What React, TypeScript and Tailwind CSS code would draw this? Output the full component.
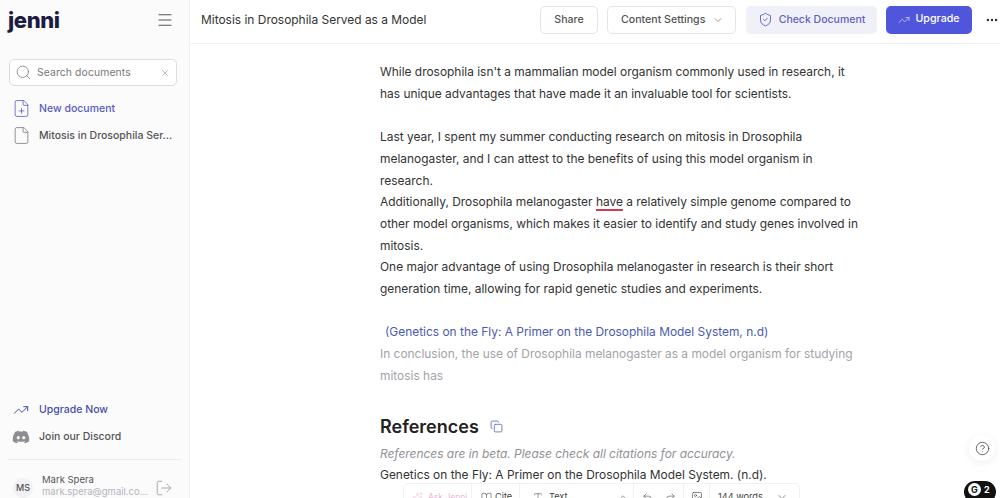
import { ChevronDown, ChevronUp, Copy, Image, LogOut, Menu, MoreHorizontal, Redo2, Search, ShieldCheck, TrendingUp, Undo2, X, BookOpen, HelpCircle, FilePlus, File, Type, Sparkles } from 'lucide-react';
import { FaDiscord } from 'react-icons/fa';

const font = "font-['Inter','Noto_Sans',sans-serif]";

function App() {
  return (
    <div className={`${font} relative h-[498px] w-[1000px] overflow-hidden bg-white flex text-[#242429] whitespace-nowrap`}>
      {/* Sidebar */}
      <aside className="w-[190px] h-full shrink-0 bg-[#fbfbfc] border-r border-[#f0f0f2] flex flex-col">
        <div className="h-[40px] flex items-center justify-between pl-[8px] pr-[15px]">
          <span className="text-[22px] font-extrabold tracking-[-0.4px] text-[#1d1b3f] leading-none">jenni</span>
          <Menu className="w-[18px] h-[18px] text-[#555]" strokeWidth={1.5} />
        </div>
        <div className="ml-[9px] w-[168px] mt-[19px] h-[27px] border border-[#dcdde2] rounded-[5px] bg-white flex items-center pl-[5px] pr-[6px]">
          <Search className="w-[17px] h-[17px] text-[#777]" strokeWidth={1.1} />
          <span className="ml-[5px] text-[10.4px] text-[#777] flex-1 tracking-[0.1px]">Search documents</span>
          <X className="w-[10px] h-[10px] text-[#999]" strokeWidth={1.5} />
        </div>
        <div className="mt-[9px] pl-[12px] flex items-center gap-[8px] h-[27px]">
          <FilePlus className="w-[19px] h-[19px] text-[#5558c8]" strokeWidth={1} />
          <span className="text-[10.5px] font-medium text-[#5a5dbd]">New document</span>
        </div>
        <div className="pl-[12px] flex items-center gap-[8px] h-[27px]">
          <File className="w-[19px] h-[19px] text-[#777]" strokeWidth={1} />
          <span className="text-[10.5px] font-medium text-[#555]">Mitosis in Drosophila Ser...</span>
        </div>
        <div className="mt-auto flex flex-col">
          <div className="pl-[13px] flex items-center gap-[10px] h-[27px]">
            <TrendingUp className="w-[16px] h-[16px] text-[#4a4fa8]" strokeWidth={1.5} />
            <span className="text-[10.5px] font-medium text-[#4a4fa8]">Upgrade Now</span>
          </div>
          <div className="pl-[12px] flex items-center gap-[9px] h-[27px]">
            <FaDiscord className="w-[18px] h-[18px] text-[#8d8d94]" />
            <span className="text-[10.5px] font-medium text-[#555]">Join our Discord</span>
          </div>
          <div className="mx-[8px] mt-[9px] border-t border-[#ececef]" />
          <div className="h-[38px] flex items-start pt-[18px] pl-[13px] pr-[16px]">
            <div className="w-[20px] h-[20px] rounded-full bg-[#f1f1f3] flex items-center justify-center text-[9px] font-medium text-[#555]">MS</div>
            <div className="ml-[9px] flex-1 flex flex-col -mt-[4px]">
              <span className="text-[9.5px] leading-[12px] text-[#555]">Mark Spera</span>
              <span className="text-[9.5px] leading-[12px] text-[#b4b4ba]">mark.spera@gmail.co...</span>
            </div>
            <LogOut className="w-[18px] h-[18px] mt-[1px] text-[#999]" strokeWidth={1.1} />
          </div>
        </div>
      </aside>

      {/* Main */}
      <main className="flex-1 min-w-0 h-full flex flex-col">
        <header className="h-[44px] shrink-0 border-b border-[#f0f0f2] flex items-center pl-[11px] pr-[1px] pb-[4px]">
          <span className="text-[11.95px] text-[#333] flex-1">Mitosis in Drosophila Served as a Model</span>
          <div className="w-[58px] h-[28px] border border-[#e4e4e8] rounded-[5px] flex items-center justify-center text-[10.6px] font-medium text-[#555]">Share</div>
          <div className="ml-[9px] w-[129px] h-[28px] border border-[#e4e4e8] rounded-[5px] flex items-center pl-[13px] gap-[7px] text-[10.6px] font-medium text-[#555]">
            Content Settings
            <ChevronDown className="w-[12px] h-[12px] text-[#777]" strokeWidth={1.5} />
          </div>
          <div className="ml-[10px] w-[131px] h-[28px] rounded-[5px] bg-[#f0f0f9] flex items-center justify-center gap-[6px] text-[10.5px] font-medium text-[#5f63c0]">
            <ShieldCheck className="w-[15px] h-[15px]" strokeWidth={1.5} />
            Check Document
          </div>
          <div className="ml-[9px] w-[86px] h-[28px] rounded-[5px] bg-[#4f56dc] flex items-center justify-center gap-[5px] text-[10.7px] font-medium text-white">
            <TrendingUp className="w-[12px] h-[12px] text-[#d5d6f5]" strokeWidth={1.5} />
            Upgrade
          </div>
          <MoreHorizontal className="ml-[13px] w-[14px] h-[14px] text-[#333]" strokeWidth={2.25} />
        </header>

        <div className="relative flex-1 min-h-0 overflow-hidden pl-[190px] pt-[17px]">
          <div className="text-[11.93px] leading-[21.7px] text-[#333]">
            <p>While drosophila isn't a mammalian model organism commonly used in research, it</p>
            <p>has unique advantages that have made it an invaluable tool for scientists.</p>
            <p className="mt-[21.7px]">Last year, I spent my summer conducting research on mitosis in Drosophila</p>
            <p>melanogaster, and I can attest to the benefits of using this model organism in</p>
            <p>research.</p>
            <p>Additionally, Drosophila melanogaster <span className="underline decoration-[#d0394f] decoration-[1.5px] underline-offset-[3px]">have</span> a relatively simple genome compared to</p>
            <p>other model organisms, which makes it easier to identify and study genes involved in</p>
            <p>mitosis.</p>
            <p>One major advantage of using Drosophila melanogaster in research is their short</p>
            <p>generation time, allowing for rapid genetic studies and experiments.</p>
            <p className="mt-[21.7px] pl-[5px] text-[#4a5bb0]">(Genetics on the Fly: A Primer on the Drosophila Model System, n.d)</p>
            <p className="text-[#a3a3a8]">In conclusion, the use of Drosophila melanogaster as a model organism for studying</p>
            <p className="text-[#a3a3a8]">mitosis has</p>
          </div>
          <div className="mt-[27px] flex items-center gap-[11px]">
            <h2 className="text-[18px] leading-[26px] font-semibold text-[#222]">References</h2>
            <Copy className="w-[13px] h-[13px] text-[#5f63c0]" strokeWidth={1.5} />
          </div>
          <p className="mt-[5px] text-[11.93px] leading-[17px] italic text-[#909096]">References are in beta. Please check all citations for accuracy.</p>
          <p className="mt-[4px] text-[11.93px] leading-[17px] text-[#333]">Genetics on the Fly: A Primer on the Drosophila Model System. (n.d).</p>

          {/* Floating toolbar */}
          <div className="absolute left-[213px] top-[439px] w-[397px] h-[28px] bg-white border border-[#f1f1f3] rounded-[5px] flex items-center text-[9.2px] text-[#444] pl-[8px]">
            <Sparkles className="w-[11px] h-[11px] text-[#e9b8d8]" strokeWidth={1.25} />
            <span className="ml-[5px] text-[8.5px] text-[#e9b8d8] w-[43px]">Ask Jenni</span>
            <div className="w-[48px] flex items-center gap-[3px] border-l border-[#f1f1f3] h-full pl-[9px]">
              <BookOpen className="w-[11px] h-[11px]" strokeWidth={1.25} />Cite
            </div>
            <div className="w-[114px] flex items-center border-l border-[#f1f1f3] h-full pl-[13px]">
              <Type className="w-[10px] h-[10px]" strokeWidth={1.25} />
              <span className="ml-[6px] flex-1">Text</span>
              <ChevronUp className="w-[10px] h-[10px] mr-[5px]" strokeWidth={1.25} />
            </div>
            <div className="w-[50px] flex items-center justify-center gap-[12px] border-l border-[#f1f1f3] h-full">
              <Undo2 className="w-[11px] h-[11px]" strokeWidth={1.25} />
              <Redo2 className="w-[11px] h-[11px]" strokeWidth={1.25} />
            </div>
            <div className="w-[26px] flex items-center justify-center border-l border-[#f1f1f3] h-full">
              <Image className="w-[12px] h-[12px]" strokeWidth={1.25} />
            </div>
            <div className="flex-1 flex items-center border-l border-[#f1f1f3] h-full pl-[8px]">
              <span className="flex-1">144 words</span>
              <ChevronDown className="w-[12px] h-[12px] mr-[11px]" strokeWidth={1.25} />
            </div>
          </div>
        </div>
      </main>

      {/* Help + Grammarly badges */}
      <div className="absolute left-[969px] top-[435px] w-[26px] h-[26px] rounded-full bg-white shadow-[0_2px_8px_rgba(0,0,0,0.07)] flex items-center justify-center">
        <HelpCircle className="w-[15px] h-[15px] text-[#444]" strokeWidth={1.25} />
      </div>
      <div className="absolute left-[964px] top-[481px] w-[32px] h-[22px] rounded-full bg-[#111] flex items-start pt-[2px] pl-[4px] gap-[3px]">
        <div className="w-[13px] h-[13px] rounded-full bg-white text-[#111] text-[9px] font-bold leading-[13px] text-center">G</div>
        <span className="text-[9px] leading-[13px] font-bold text-white">2</span>
      </div>
    </div>
  );
}

export default App;
